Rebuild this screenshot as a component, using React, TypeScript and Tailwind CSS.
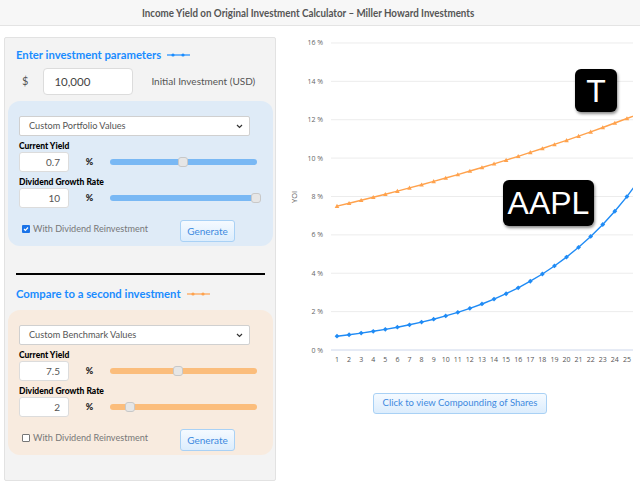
import React from "react";

const font = { fontFamily: 'Lato, "Open Sans", sans-serif' };

const xPos = (n: number) => 57 + (n - 1) * 12.08;
const yPos = (v: number) => 324 - v * 19.19;

const aaplData = Array.from({ length: 26 }, (_, i) => 0.72 * Math.pow(1.1055, i));
const tData = Array.from({ length: 26 }, (_, i) => 7.5 * Math.pow(1.02, i));

const LegendLine = ({ color }: { color: string }) => (
  <svg width="24" height="6" viewBox="0 0 24 6" className="ml-[6px]">
    <line x1="0" y1="3" x2="23" y2="3" stroke={color} strokeWidth="1.2" />
    <circle cx="6" cy="3" r="1.6" fill={color} />
    <circle cx="16" cy="3" r="1.6" fill={color} />
  </svg>
);

const Slider = ({ pos, track }: { pos: number; track: string }) => (
  <div className="relative h-[10px] w-[147px] flex items-center">
    <div className={`h-[6px] w-full rounded-full ${track}`} />
    <div
      className="absolute top-0 h-[10px] w-[10px] rounded-[3px] border border-[#c8c8c8] bg-[#e6e6e6]"
      style={{ left: pos - 5 }}
    />
  </div>
);

const FieldRow = ({
  label,
  value,
  pos,
  track,
}: {
  label: string;
  value: string;
  pos: number;
  track: string;
}) => (
  <div>
    <div className="pt-[1px] text-[8.5px] font-black leading-[12px] text-black">{label}</div>
    <div className="flex items-center">
      <div className="flex h-[20px] w-[50px] items-center justify-end rounded-[3px] border border-[#dcdcdc] bg-white pr-[8px] text-[10px] text-[#555]">
        {value}
      </div>
      <span className="w-[41px] text-center text-[9px] font-black text-[#222]">%</span>
      <Slider pos={pos} track={track} />
    </div>
  </div>
);

const ParamBox = ({
  bg,
  select,
  yieldValue,
  growth,
  yieldPos,
  growthPos,
  track,
  checked,
}: {
  bg: string;
  select: string;
  yieldValue: string;
  growth: string;
  yieldPos: number;
  growthPos: number;
  track: string;
  checked: boolean;
}) => (
  <div className={`ml-[3px] h-[145px] w-[265px] rounded-[12px] ${bg} pl-[11px] pt-[15px]`}>
    <div className="flex h-[20px] w-[231px] items-center justify-between rounded-[2px] border border-[#d0d0d0] bg-white pl-[9px] pr-[6px] text-[9.2px] text-[#555]">
      <span>{select}</span>
      <svg width="7" height="5" viewBox="0 0 7 5">
        <path d="M1 1l2.5 2.5L6 1" fill="none" stroke="#333" strokeWidth="1.2" />
      </svg>
    </div>
    <div className="mt-[3px]">
      <FieldRow label="Current Yield" value={yieldValue} pos={yieldPos} track={track} />
    </div>
    <div className="mt-[3px]">
      <FieldRow label="Dividend Growth Rate" value={growth} pos={growthPos} track={track} />
    </div>
    <div className="mt-[12px] flex h-[22px] items-center">
      <div
        className={`ml-[3px] mt-[-4px] flex h-[8px] w-[8px] items-center justify-center rounded-[1px] ${
          checked ? "bg-[#1a73e8]" : "border border-[#777] bg-white"
        }`}
      >
        {checked && (
          <svg width="6" height="6" viewBox="0 0 6 6">
            <path d="M1 3l1.4 1.4L5 1.5" fill="none" stroke="white" strokeWidth="1.2" />
          </svg>
        )}
      </div>
      <span className="ml-[3px] mt-[-4px] w-[147px] text-[9.1px] text-[#777]">With Dividend Reinvestment</span>
      <div className="flex h-[22px] w-[55px] items-center justify-center rounded-[3px] border border-[#a9d1f5] bg-gradient-to-b from-[#f5faff] to-[#dcedfd] text-[10px] text-[#3d8ae0]">
        Generate
      </div>
    </div>
  </div>
);

const Chart = () => {
  const grid = [0, 2, 4, 6, 8, 10, 12, 14, 16];
  const line = (d: number[]) =>
    d.map((v, i) => `${i === 0 ? "M" : "L"}${xPos(i + 1).toFixed(1)} ${yPos(v).toFixed(1)}`).join(" ");
  return (
    <svg width="360" height="350" viewBox="0 0 360 350" className="block">
      <defs>
        <clipPath id="plot">
          <rect x="50" y="0" width="303" height="330" />
        </clipPath>
      </defs>
      {grid.map((g) => (
        <g key={g}>
          <line
            x1="51"
            x2="353"
            y1={yPos(g)}
            y2={yPos(g)}
            stroke={g === 0 ? "#ccd6eb" : "#ececec"}
            strokeWidth="1"
          />
          <text
            x="43"
            y={yPos(g) + 2.5}
            textAnchor="end"
            fontSize="7"
            fill="#666"
            fontFamily="Open Sans, sans-serif"
          >
            {g} %
          </text>
        </g>
      ))}
      <text
        x="17"
        y="171"
        fontSize="7.5"
        fill="#666"
        textAnchor="middle"
        transform="rotate(-90 17 171)"
        fontFamily="Open Sans, sans-serif"
      >
        YOI
      </text>
      {Array.from({ length: 25 }, (_, i) => (
        <text
          key={i}
          x={xPos(i + 1)}
          y="336"
          fontSize="7"
          fill="#555"
          textAnchor="middle"
          fontFamily="Open Sans, sans-serif"
        >
          {i + 1}
        </text>
      ))}
      <g clipPath="url(#plot)">
        <path d={line(tData)} fill="none" stroke="#ffa24d" strokeWidth="1.4" />
        {tData.map((v, i) => {
          const x = xPos(i + 1);
          const y = yPos(v);
          return (
            <path
              key={i}
              d={`M${x} ${y - 2.3}L${x + 2.3} ${y + 1.8}L${x - 2.3} ${y + 1.8}Z`}
              fill="#ffa24d"
            />
          );
        })}
        <path d={line(aaplData)} fill="none" stroke="#1f8bf5" strokeWidth="1.4" />
        {aaplData.map((v, i) => {
          const x = xPos(i + 1);
          const y = yPos(v);
          return (
            <path
              key={i}
              d={`M${x} ${y - 2.4}L${x + 2.4} ${y}L${x} ${y + 2.4}L${x - 2.4} ${y}Z`}
              fill="#1f8bf5"
            />
          );
        })}
      </g>
    </svg>
  );
};

export default function App() {
  return (
    <div className="h-[489px] w-[640px] overflow-hidden bg-white" style={font}>
      <div className="flex h-[26px] items-center border-b border-[#e4e4e4] bg-[#f7f7f7] pl-[142px]">
        <span className="origin-left scale-x-[0.85] whitespace-nowrap text-[11.5px] font-bold text-[#555]">
          Income Yield on Original Investment Calculator – Miller Howard Investments
        </span>
      </div>
      <div className="flex">
        <div className="ml-[4px] mt-[11px] h-[444px] w-[272px] shrink-0 rounded-[2px] border border-[#e2e2e2] bg-[#f3f3f3]">
          <div className="ml-[11px] mt-[9px] flex h-[16px] items-center text-[11.3px] font-bold text-[#1a8cff]">
            Enter investment parameters
            <LegendLine color="#1a8cff" />
          </div>
          <div className="mt-[5px] flex items-center">
            <span className="ml-[17px] text-[11px] text-[#555]">$</span>
            <div className="ml-[15px] flex h-[27px] w-[90px] items-center rounded-[4px] border border-[#dcdcdc] bg-white pl-[10px] text-[11.5px] text-[#444]">
              10,000
            </div>
            <span className="ml-[18px] text-[10px] text-[#555]">Initial Investment (USD)</span>
          </div>
          <div className="mt-[6px]">
            <ParamBox
              bg="bg-[#dfebf7]"
              select="Custom Portfolio Values"
              yieldValue="0.7"
              growth="10"
              yieldPos={73}
              growthPos={146}
              track="bg-[#79b8f4]"
              checked
            />
          </div>
          <div className="ml-[11px] mt-[27px] h-[2px] w-[249px] bg-black" />
          <div className="ml-[11px] mt-[11px] flex h-[16px] items-center text-[11.3px] font-bold text-[#1a8cff]">
            Compare to a second investment
            <LegendLine color="#ffa24d" />
          </div>
          <div className="mt-[8px]">
            <ParamBox
              bg="bg-[#f8ebdf]"
              select="Custom Benchmark Values"
              yieldValue="7.5"
              growth="2"
              yieldPos={68}
              growthPos={20}
              track="bg-[#fbbd7c]"
              checked={false}
            />
          </div>
        </div>
        <div className="relative ml-[4px] flex flex-1 flex-col items-center">
          <Chart />
          <div className="mt-[17px] flex h-[21px] w-[174px] items-center justify-center rounded-[3px] border border-[#a9d1f5] bg-gradient-to-b from-[#f5faff] to-[#dcedfd] text-[9.5px] text-[#3d8ae0]">
            Click to view Compounding of Shares
          </div>
          <div
            className="absolute left-[295px] top-[43px] flex h-[43px] w-[42px] items-center justify-center rounded-[6px] bg-black text-[32px] leading-none text-white shadow-[1px_2px_3px_rgba(0,0,0,0.45)]"
            style={{ fontFamily: '"Liberation Sans", Arial, sans-serif' }}
          >
            T
          </div>
          <div
            className="absolute left-[223px] top-[154px] flex h-[46px] w-[91px] items-center justify-center rounded-[6px] bg-black text-[32px] leading-none text-white shadow-[1px_2px_3px_rgba(0,0,0,0.45)]"
            style={{ fontFamily: '"Liberation Sans", Arial, sans-serif' }}
          >
            AAPL
          </div>
        </div>
      </div>
    </div>
  );
}
